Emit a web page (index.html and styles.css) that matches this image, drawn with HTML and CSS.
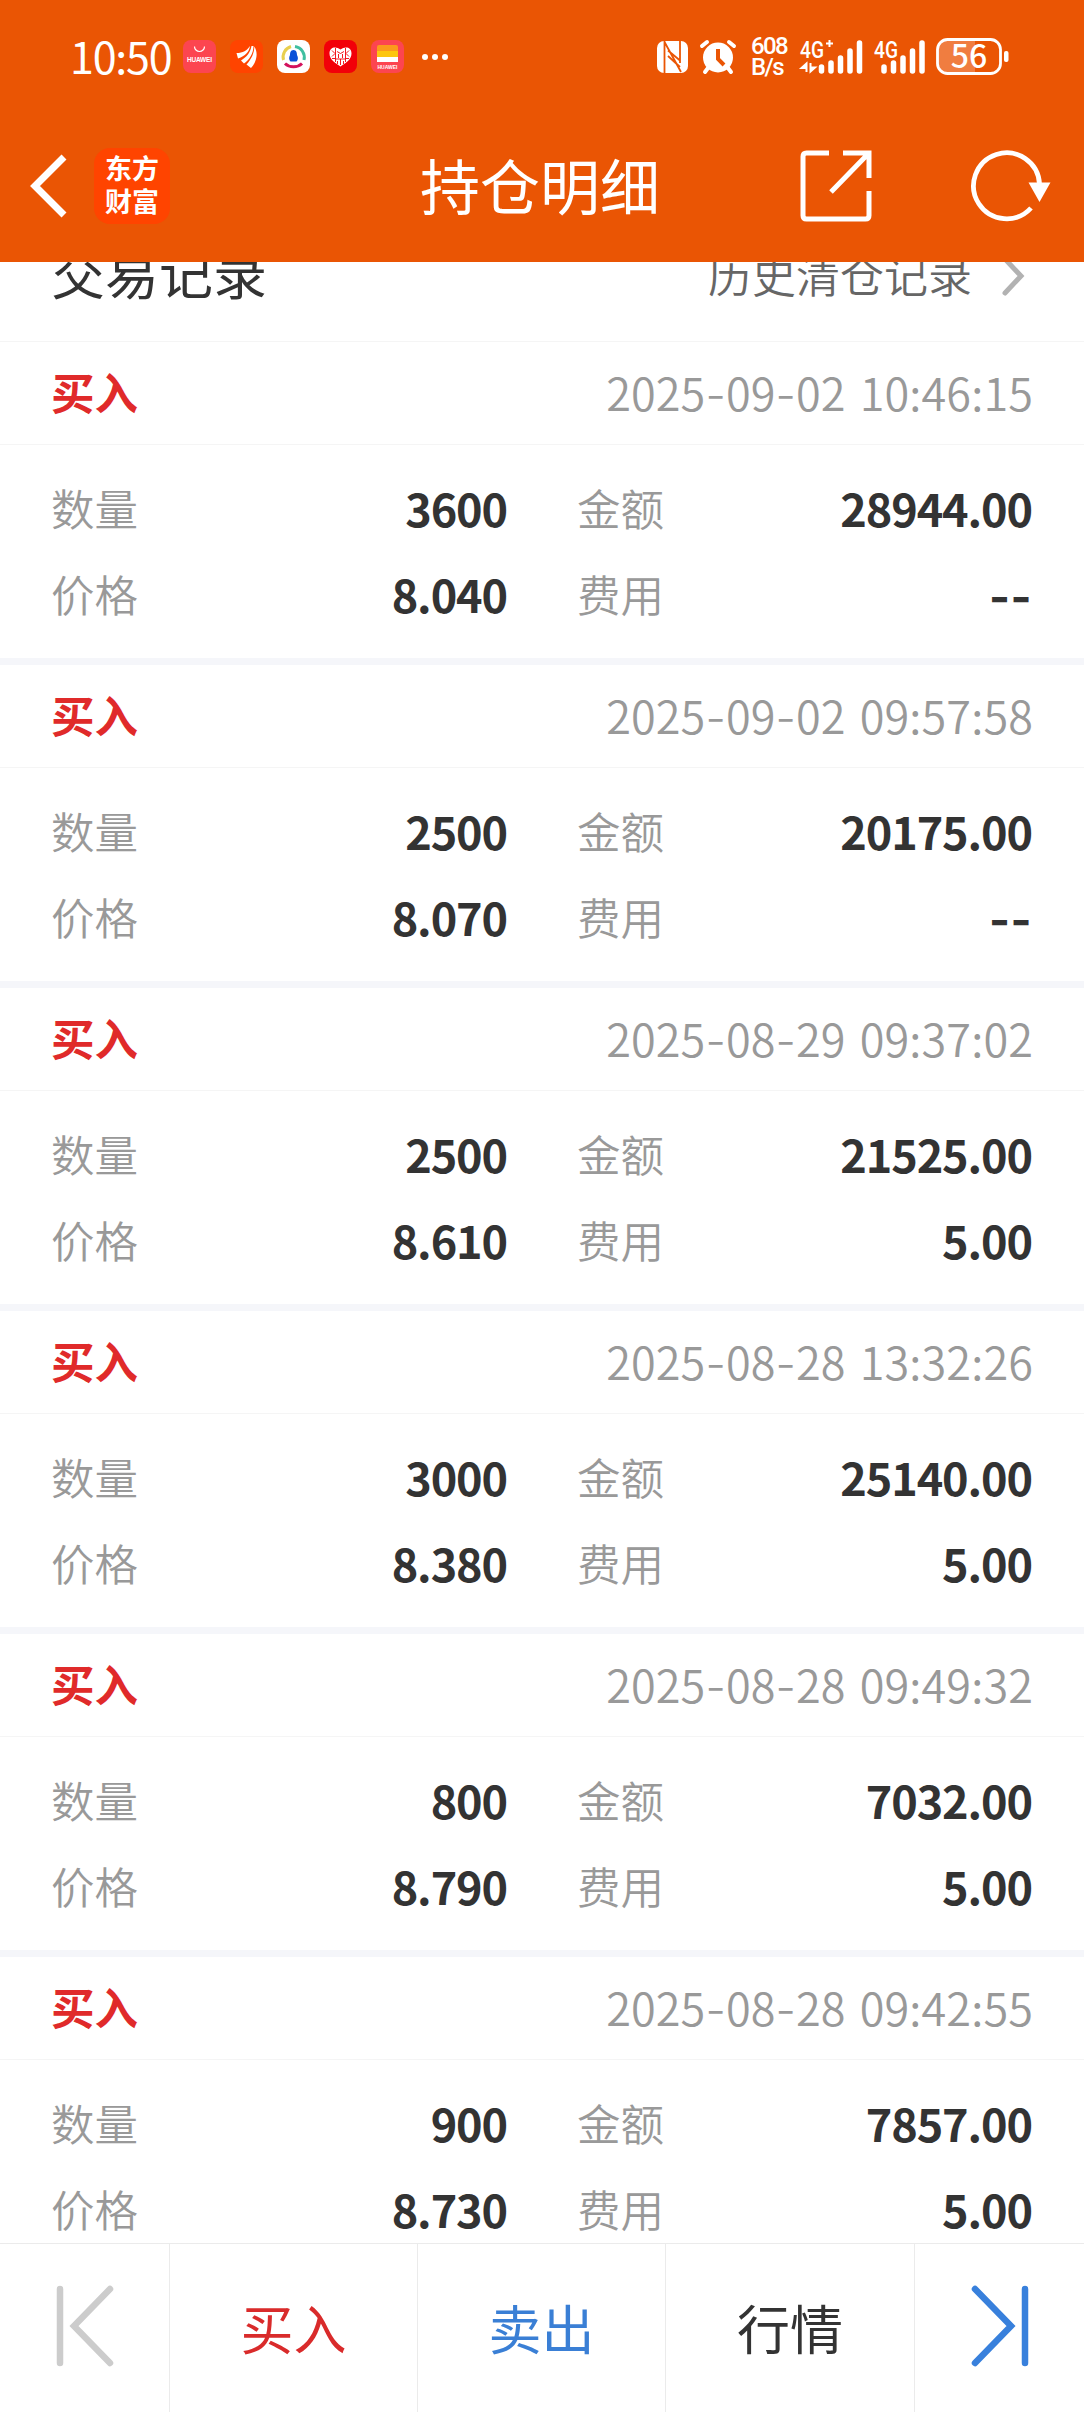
FILE: index.html
```html
<!DOCTYPE html>
<html lang="zh-CN">
    <head>
        <meta charset="utf-8">
        <title>持仓明细</title>
        <link rel="stylesheet" href="styles.css">
    </head>
    <body>
        <div id="app">
            <header>
                <div class="status-bar">
                    <span class="time">10:50</span>
                    <div class="apps">
                        <svg width="33" height="33" viewBox="0 0 33 33">
                            <rect width="33" height="33" rx="8" fill="#fc4550"/>
                            <path d="M11.5 6.5a5 5 0 0 0 10 0" fill="none" stroke="#fff" stroke-width="1.2"/>
                            <text x="16.5" y="21.5" class="brand" textLength="25">HUAWEI</text>
                        </svg>
                        <svg width="33" height="33" viewBox="0 0 33 33">
                            <rect width="33" height="33" rx="8" fill="#ff4400"/>
                            <path d="M6.500 13C13 13 17 10.500 20 6C19 12 15.500 16 8 18.500Z M11 20.500C17 17 20.500 12 21.500 6L23.500 6C23.500 13 19.500 20 14 23.500Z M16.500 24.500C21.500 19 24.300 13 24.300 6.500C28 12 27.500 21 21 28Z" fill="#fff"/>
                        </svg>
                        <svg width="33" height="33" viewBox="0 0 33 33">
                            <rect width="33" height="33" rx="8" fill="#fff"/>
                            <g fill="none" stroke-width="3">
                                <path d="M6.500 20A11 11 0 0 1 14 6.500" stroke="#e8cf4e"/>
                                <path d="M18 6.500A11 11 0 0 1 27 20" stroke="#3fbfa0"/>
                                <path d="M8 23.500A11 9 0 0 0 25 23.500" stroke="#d3125c"/>
                            </g>
                            <path d="M16.500 10c3 0 3.500 3 3.500 5 1.500 3 1 5-.500 6.500h-6c-1.500-1.500-2-3.500-.500-6.500 0-2 .500-5 3.500-5z" fill="#0a50d8"/>
                        </svg>
                        <svg width="33" height="33" viewBox="0 0 33 33">
                            <rect width="33" height="33" rx="8" fill="#f20009"/>
                            <path d="M16.500 9.500C12 6 5.500 7 5.500 13.500C5.500 20 12 23.500 16.500 26.500C21 23.500 27.500 20 27.500 13.500C27.500 7 21 6 16.500 9.500Z" fill="#fff"/>
                            <path d="M8 10.500l3 3-3 3M11.500 8v14M25 10.500l-3 3 3 3M21.500 8v14M13 11.500l3.500 2 3.500-2M14.500 14v4M18.500 14v4M12 19h9M16.500 19v6M8 18.500h3.500M21.500 18.500H25M13.500 21v3M19.500 21v3" fill="none" stroke="#f20009" stroke-width=".9"/>
                        </svg>
                        <svg width="33" height="33" viewBox="0 0 33 33">
                            <rect width="33" height="33" rx="8" fill="#fc4550"/>
                            <path d="M6 7a2 2 0 0 1 2-2h17a2 2 0 0 1 2 2v4H6z" fill="#fb9a1c"/>
                            <path d="M6 11h21v6H6z" fill="#fdc60f"/>
                            <path d="M6 17h21v5H6z" fill="#fff"/>
                            <text x="16.500" y="29" class="brand small" textLength="20">HUAWEI</text>
                        </svg>
                    </div>
                    <svg class="dots" width="28" height="8" viewBox="0 0 28 8" fill="#fff">
                        <circle cx="4" cy="4" r="3"/><circle cx="14" cy="4" r="3"/><circle cx="24" cy="4" r="3"/>
                    </svg>
                    <div class="indicators">
                        <svg class="nfc" width="31" height="32" viewBox="0 0 31 32">
                            <rect width="31" height="32" rx="7" fill="#fff"/>
                            <path d="M7.500 0V32M7.500 1L24 31M23 0V22M11 9.500l12 10M11 15l12 11" fill="none" stroke="#ea5504" stroke-width="1.800"/>
                        </svg>
                        <svg class="alarm" width="36" height="34" viewBox="0 0 36 34">
                            <path d="M2 6l5-4M34 6l-5-4M8 28l-3 4M28 28l3 4" stroke="#fff" stroke-width="4" stroke-linecap="round"/>
                            <circle cx="18" cy="17.500" r="15" fill="#fff"/>
                            <path d="M18 9v10l6 6" fill="none" stroke="#ea5504" stroke-width="4"/>
                        </svg>
                        <div class="speed"><span>608</span><span>B/s</span></div>
                        <svg class="signal" width="64" height="36" viewBox="0 0 64 36">
                            <text x="0" y="18.500" class="net" textLength="24" lengthAdjust="spacingAndGlyphs">4G</text>
                            <path d="M29.500 1v7M26 4.500h7" stroke="#fff" stroke-width="2"/>
                            <path d="M6.500 33V24.500L1.500 29H6M10.500 24v8.500L15 28.500h-4" fill="#fff" stroke="#fff" stroke-width="2"/>
                            <path d="M21.500 28v4M31 24v8M40.500 19v13M50 12v20M59.500 4v28" stroke="#fff" stroke-width="5.500" stroke-linecap="round"/>
                        </svg>
                        <svg class="signal" width="52" height="36" viewBox="0 0 52 36">
                            <text x="0" y="18.500" class="net" textLength="24" lengthAdjust="spacingAndGlyphs">4G</text>
                            <path d="M10 28v4M19.500 24v8M29 19v13M38.500 12v20M48 4v28" stroke="#fff" stroke-width="5.500" stroke-linecap="round"/>
                        </svg>
                        <svg class="battery" width="74" height="37" viewBox="0 0 74 37">
                            <path d="M39 2H12Q2 2 2 12v13q0 10 10 10h27z" fill="#f07d40"/>
                            <rect x="1.500" y="1.500" width="63" height="34" rx="10" fill="none" stroke="#fff" stroke-width="2.800"/>
                            <rect x="68" y="13" width="4.500" height="11" rx="2" fill="#fff"/>
                            <text x="33" y="30" class="level">56</text>
                        </svg>
                    </div>
                </div>
                <div class="nav-bar">
                    <svg class="back" width="38" height="64" viewBox="0 0 38 64">
                        <path d="M34 3L5 32l29 29" fill="none" stroke="#fff" stroke-width="7"/>
                    </svg>
                    <div class="logo">东方<br>财富</div>
                    <h1>持仓明细</h1>
                    <svg class="share" width="72" height="72" viewBox="0 0 72 72" fill="none" stroke="#fff" stroke-width="5">
                        <path d="M29 3H6.500Q3 3 3 6.500V65.500Q3 69 6.500 69H65.500Q69 69 69 65.500V41"/>
                        <path d="M43 3H69V28M68 4L31 42"/>
                    </svg>
                    <svg class="refresh" width="80" height="72" viewBox="0 0 80 72">
                        <path d="M68.500 34A33 33 0 1 0 60 58" fill="none" stroke="#fff" stroke-width="4.800"/>
                        <path d="M57.500 32.500h22L68.500 52z" fill="#fff"/>
                    </svg>
                </div>
            </header>
            <div class="section-title">
                <h2>交易记录</h2>
                <a>历史清仓记录</a>
                <svg width="22" height="40" viewBox="0 0 22 40">
                    <path d="M3 3l16 17L3 37" fill="none" stroke="#b2b2b2" stroke-width="5" stroke-linecap="round"/>
                </svg>
            </div>
            <main id="records"></main>
            <footer>
                <a class="side">
                    <svg width="58" height="84" viewBox="0 0 58 84" fill="none" stroke="#ccc" stroke-width="6.500" stroke-linecap="round">
                        <path d="M4 4v74M54 4L18 41l36 37"/>
                    </svg>
                </a>
                <a class="buy">买入</a>
                <a class="sell">卖出</a>
                <a class="quote">行情</a>
                <a class="side">
                    <svg width="58" height="84" viewBox="0 0 58 84" fill="none" stroke="#3880dc" stroke-width="6.500" stroke-linecap="round">
                        <path d="M54 4v74M4 4l36 37L4 78"/>
                    </svg>
                </a>
            </footer>
        </div>
    <script src="script.js"></script>
    </body>
</html>
```

FILE: styles.css
```css
body {
    font-family: "Noto Sans CJK SC", sans-serif;
    margin: 0;
    background-color: #fff;
    color: #333;
}

#app {
    display: flex;
    flex-direction: column;
    height: 2412px;
    overflow: hidden;
}

svg {
    overflow: visible;
}

h1, h2 {
    margin: 0;
    font-weight: 400;
}

header {
    background-color: #ea5504;
    color: #fff;
    height: 262px;
    flex-shrink: 0;
}

.status-bar {
    display: flex;
    align-items: center;
    height: 113px;
    padding: 0 74px 0 70px;
}

.time {
    font-size: 43px;
    line-height: 60px;
    padding-bottom: 4px;
    width: 113px;
    letter-spacing: -1.2px;
}

.apps {
    display: flex;
    gap: 14px;
    margin-right: 17px;
}

.brand {
    fill: #fff;
    font-family: "Liberation Sans", sans-serif;
    font-size: 6.5px;
    font-weight: bold;
    text-anchor: middle;
}

.brand.small {
    font-size: 5px;
}

.indicators {
    display: flex;
    align-items: center;
    margin-left: auto;
}

.alarm {
    margin-left: 12px;
}

.speed {
    display: flex;
    flex-direction: column;
    font-family: Roboto, sans-serif;
    font-size: 24px;
    font-weight: 500;
    line-height: 21px;
    letter-spacing: -1.6px;
    width: 49px;
    margin-left: 15px;
}

.net {
    fill: #fff;
    font-family: Roboto, sans-serif;
    font-size: 23px;
    font-weight: 500;
}

.signal + .signal {
    margin-left: 10px;
}

.battery {
    margin-left: 10px;
}

.level {
    fill: #fff;
    font-size: 32px;
    font-weight: 500;
    text-anchor: middle;
}

.nav-bar {
    display: flex;
    align-items: center;
    height: 146px;
    padding: 0 33px 0 30px;
}

.logo {
    box-sizing: border-box;
    width: 76px;
    height: 76px;
    margin-left: 26px;
    padding-top: 3px;
    border-radius: 16px;
    background-color: #ff4400;
    font-size: 27px;
    font-weight: bold;
    line-height: 33px;
    text-align: center;
}

.nav-bar h1 {
    flex: 1;
    font-size: 60px;
    line-height: 80px;
    padding: 0 0 4px 250px;
}

.refresh {
    margin-left: 99px;
}

.section-title {
    display: flex;
    align-items: flex-start;
    height: 79px;
    padding: 0 60px 0 51px;
    overflow: hidden;
    flex-shrink: 0;
    border-bottom: 1px solid #f5f5f5;
}

.section-title h2 {
    font-size: 54px;
    line-height: 20px;
}

.section-title a {
    margin-left: auto;
    color: #666;
    font-size: 44px;
    font-weight: 350;
    line-height: 24px;
}

.section-title svg {
    margin: -6px 0 0 30px;
}

#records {
    flex: 1;
    overflow: hidden;
}

.record {
    border-bottom: 7px solid #f5f6fa;
}

.record-head {
    box-sizing: border-box;
    display: flex;
    align-items: center;
    justify-content: space-between;
    height: 103px;
    padding: 0 51px 4px 51px;
    border-bottom: 1px solid #f5f5f5;
}

.type {
    color: #e02a2a;
    font-size: 43.5px;
    font-weight: 700;
}

.date {
    color: #999;
    font-size: 45px;
    font-weight: 350;
    letter-spacing: 0.1px;
    word-spacing: 4px;
}

/* wider hyphen than the CJK face has */
.dash {
    font-family: Inter, sans-serif;
}

.record-body {
    display: grid;
    grid-template-columns: 456px 455px;
    column-gap: 70px;
    grid-auto-rows: 86px;
    padding: 19px 52px 22px 51px;
}

.field {
    display: flex;
    align-items: center;
    justify-content: space-between;
}

.label {
    color: #999;
    font-size: 43.5px;
    font-weight: 350;
}

.value {
    font-size: 45px;
    font-weight: 700;
    letter-spacing: -1.1px;
}

.value .dash {
    letter-spacing: 0.5px;
}

footer {
    display: grid;
    grid-template-columns: 170px 248px 248px 249px 169px;
    height: 168px;
    flex-shrink: 0;
    border-top: 1px solid #ebebeb;
}

footer a {
    display: flex;
    align-items: center;
    justify-content: center;
    padding-bottom: 3px;
    border-right: 1px solid #ebebeb;
    font-size: 53px;
}

footer a:last-child {
    border-right: none;
}

.buy {
    color: #d92b2b;
}

.sell {
    color: #3a7fd5;
}
```

FILE: script.js
```javascript
const records = [
    { date: '2025-09-02 10:46:15', count: '3600', amount: '28944.00', price: '8.040', fee: '--' },
    { date: '2025-09-02 09:57:58', count: '2500', amount: '20175.00', price: '8.070', fee: '--' },
    { date: '2025-08-29 09:37:02', count: '2500', amount: '21525.00', price: '8.610', fee: '5.00' },
    { date: '2025-08-28 13:32:26', count: '3000', amount: '25140.00', price: '8.380', fee: '5.00' },
    { date: '2025-08-28 09:49:32', count: '800', amount: '7032.00', price: '8.790', fee: '5.00' },
    { date: '2025-08-28 09:42:55', count: '900', amount: '7857.00', price: '8.730', fee: '5.00' }
];

function dashes(text) {
    return text.replace(/-+/g, '<span class="dash">$&</span>');
}

function field(label, value) {
    return `<div class="field"><span class="label">${label}</span><span class="value">${dashes(value)}</span></div>`;
}

document.getElementById('records').innerHTML = records.map(r => `
    <div class="record">
        <div class="record-head">
            <span class="type">买入</span>
            <span class="date">${dashes(r.date)}</span>
        </div>
        <div class="record-body">
            ${field('数量', r.count)}
            ${field('金额', r.amount)}
            ${field('价格', r.price)}
            ${field('费用', r.fee)}
        </div>
    </div>`).join('');
```
